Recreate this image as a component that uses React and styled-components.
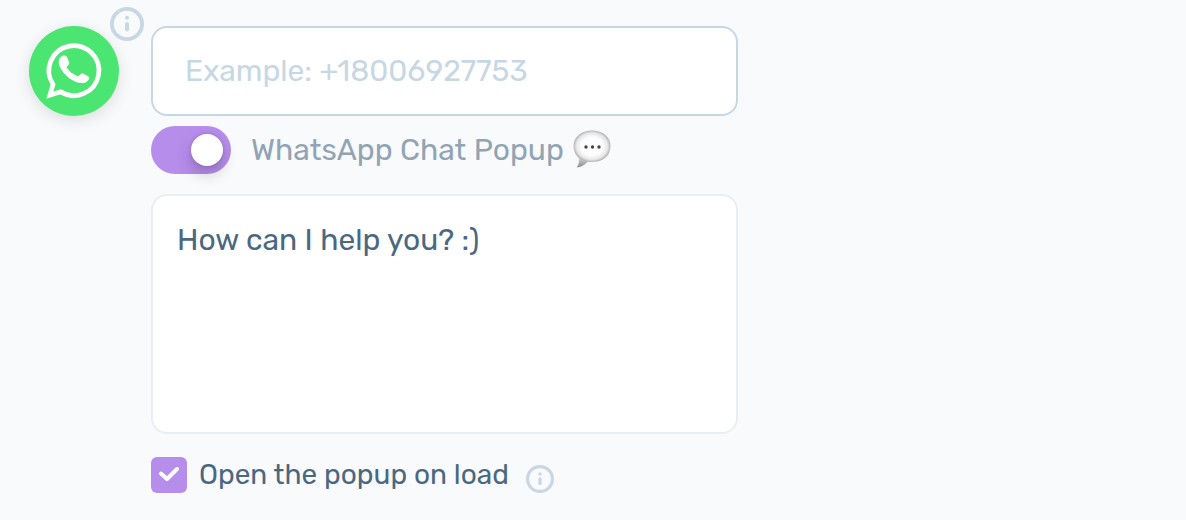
import React from "react";
import styled, { createGlobalStyle } from "styled-components";

const GlobalStyle = createGlobalStyle`
  *, *::before { box-sizing: border-box; }
  body {
    margin: 0;
    background: #f9fafc;
    color: #4a687f;
    font-family: Rubik, Roboto, sans-serif;
    font-size: 30px;
    line-height: 36px;
  }
`;

const Channel = styled.form`
  display: grid;
  grid-template-columns: 90px minmax(0, 587px);
  column-gap: 32px;
  align-items: start;
  padding: 26px 29px;
`;

const Badge = styled.div`
  position: relative;
  height: 90px;
  border-radius: 50%;
  background: #4be571;
  box-shadow: 0 4px 16px rgba(0, 0, 0, 0.12);
`;

const Logo = styled.svg`
  display: block;
  width: 100%;
  height: 100%;
`;

const HelpButton = styled.button`
  display: block;
  flex: none;
  width: ${(p) => p.$size}px;
  height: ${(p) => p.$size}px;
  padding: 0;
  border: 0;
  border-radius: 50%;
  background: none;
  color: #c7d7e4;
  cursor: pointer;
  svg { display: block; width: 100%; height: 100%; }
`;

const BadgeHelp = styled.div`
  position: absolute;
  top: -19px;
  right: -25px;
`;

const Fields = styled.div`
  display: flex;
  flex-direction: column;
`;

const PhoneInput = styled.input`
  width: 100%;
  height: 90px;
  padding: 0 32px;
  border: 2px solid #c7d7e4;
  border-radius: 16px;
  background: #fff;
  color: inherit;
  font: inherit;
  outline: 0;
  &::placeholder { color: #c7d7e4; opacity: 1; }
`;

const SwitchRow = styled.label`
  display: flex;
  align-items: center;
  gap: 20px;
  margin: 10px 0 20px;
  color: #90a4b3;
  cursor: pointer;
`;

const Switch = styled.input`
  appearance: none;
  flex: none;
  width: 80px;
  height: 48px;
  margin: 0;
  padding: 8px;
  border-radius: 24px;
  background: #c7d7e4;
  &::before {
    content: "";
    display: block;
    width: 32px;
    height: 32px;
    border-radius: 50%;
    background: #fff;
    box-shadow: 0 8px 16px rgba(0, 0, 0, 0.2), 0 0 4px rgba(0, 0, 0, 0.15);
  }
  &:checked { background: #b78deb; }
  &:checked::before { margin-left: 32px; }
`;

const SwitchText = styled.span`
  display: flex;
  align-items: center;
  gap: 8px;
`;

const Bubble = styled.svg`
  width: 40px;
  height: 40px;
`;

const Message = styled.textarea`
  display: block;
  width: 100%;
  height: 240px;
  padding: 26px 24px;
  border: 2px solid #e8eef1;
  border-radius: 16px;
  background: #fff;
  color: inherit;
  font: inherit;
  outline: 0;
  resize: none;
`;

const OptionRow = styled.div`
  display: flex;
  align-items: center;
  gap: 17px;
  margin-top: 23px;
`;

const Option = styled.label`
  display: flex;
  align-items: center;
  gap: 12px;
  font-size: 28px;
  cursor: pointer;
`;

const CheckWrap = styled.span`
  display: grid;
  width: 36px;
  height: 36px;
  > * { grid-area: 1 / 1; }
  svg { width: 36px; height: 36px; pointer-events: none; }
`;

const Check = styled.input`
  appearance: none;
  width: 36px;
  height: 36px;
  margin: 0;
  border-radius: 6px;
  background: #c7d7e4;
  &:checked { background: #b78deb; }
`;

const OptionHelp = styled.div`
  padding-top: 8px;
`;

function Help({ size, label }) {
  return (
    <HelpButton type="button" $size={size} aria-label={label}>
      <svg viewBox="0 0 34 34" fill="none" stroke="currentColor">
        <circle cx="17" cy="17" r="15.1" strokeWidth="3.8" />
        <circle cx="17" cy="10.8" r="2" fill="currentColor" stroke="none" />
        <path d="M17 17v5.5" strokeWidth="4" strokeLinecap="round" />
      </svg>
    </HelpButton>
  );
}

function WhatsAppLogo() {
  return (
    <Logo viewBox="27 78 270 270" aria-hidden="true">
      <path
        d="M122 275.500A75 75 0 1 0 99 253L89.500 285.500Z"
        fill="none"
        stroke="#fff"
        strokeWidth="14"
      />
      <path
        d="M123 171Q127 168 134 168Q139 168 140 172L146 187Q147 190 145 193L138 202Q150 222 174 231L183 223Q186 221 189 222L204 230Q207 231 206 235Q204 247 187 248Q169 249 147 233Q128 218 120 199Q114 181 123 171Z"
        fill="#fff"
        stroke="#fff"
        strokeWidth="3"
        strokeLinejoin="round"
      />
    </Logo>
  );
}

function SpeechBubble() {
  return (
    <Bubble viewBox="0 0 40 40" role="img" aria-label="speech bubble">
      <defs>
        <radialGradient id="bubble" cx="50%" cy="50%" r="50%">
          <stop offset="0" stopColor="#fff" />
          <stop offset="0.6" stopColor="#fcfcfc" />
          <stop offset="0.85" stopColor="#e6e6e6" />
          <stop offset="1" stopColor="#b4b4b4" />
        </radialGradient>
        <linearGradient id="tail" x1="0" y1="0" x2="0" y2="1">
          <stop offset="0" stopColor="#ddd" />
          <stop offset="1" stopColor="#888" />
        </linearGradient>
      </defs>
      <path d="M6.500 27Q8 34 4.500 37.500Q11 37 16.500 31Z" fill="url(#tail)" />
      <path
        d="M20 0.500C31 0.500 38.500 7 38.500 16C38.500 26 31 32 20 32C9 32 1.500 26 1.500 16C1.500 7 9 0.500 20 0.500Z"
        fill="url(#bubble)"
      />
      <g fill="#444">
        <circle cx="14" cy="17" r="1.700" />
        <circle cx="20.500" cy="17" r="1.700" />
        <circle cx="27" cy="17" r="1.700" />
      </g>
    </Bubble>
  );
}

export default function App() {
  return (
    <>
      <GlobalStyle />
      <Channel>
        <Badge>
          <WhatsAppLogo />
          <BadgeHelp>
            <Help size={34} label="About WhatsApp" />
          </BadgeHelp>
        </Badge>
        <Fields>
          <PhoneInput
            type="tel"
            aria-label="WhatsApp number"
            placeholder="Example: +18006927753"
          />
          <SwitchRow>
            <Switch type="checkbox" role="switch" defaultChecked />
            <SwitchText>
              WhatsApp Chat Popup
              <SpeechBubble />
            </SwitchText>
          </SwitchRow>
          <Message aria-label="Popup message" defaultValue="How can I help you? :)" />
          <OptionRow>
            <Option>
              <CheckWrap>
                <Check type="checkbox" defaultChecked />
                <svg viewBox="0 0 36 36" fill="none" aria-hidden="true">
                  <path
                    d="M10 16.500L16 22L26 12"
                    stroke="#fff"
                    strokeWidth="4"
                    strokeLinecap="round"
                    strokeLinejoin="round"
                  />
                </svg>
              </CheckWrap>
              Open the popup on load
            </Option>
            <OptionHelp>
              <Help size={28} label="About opening the popup on load" />
            </OptionHelp>
          </OptionRow>
        </Fields>
      </Channel>
    </>
  );
}
